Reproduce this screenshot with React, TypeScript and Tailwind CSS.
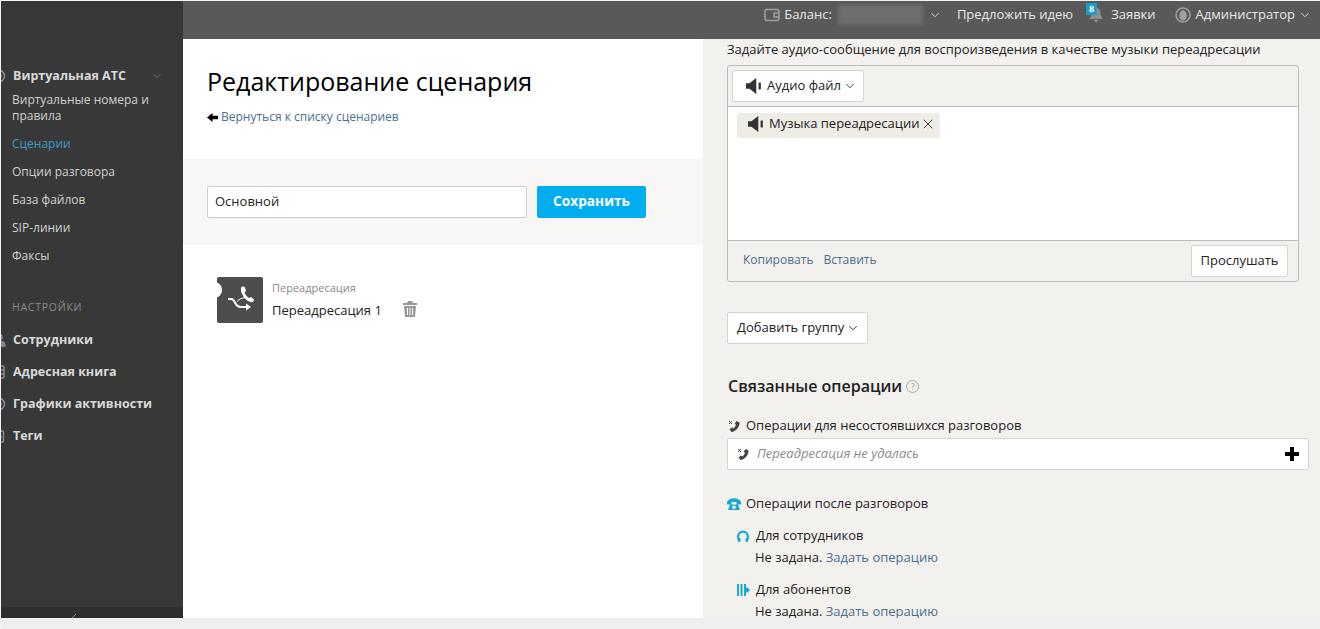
import React from "react";
import { ChevronDown, X } from "lucide-react";

const font = { fontFamily: '"Open Sans", sans-serif' };

const Speaker = ({ className = "" }: { className?: string }) => (
  <svg viewBox="0 0 14 14" className={className} fill="currentColor">
    <path d="M0 4.500h3L9 0v14L3 9.500H0z" />
    <rect x="11" y="4" width="2" height="6" />
  </svg>
);

const MissedCall = ({ className = "" }: { className?: string }) => (
  <svg viewBox="0 0 14 14" className={className} fill="currentColor">
    <path d="M9.500 2L12.500 3.500C13 7.500 8.500 13 4.500 13L2.500 10.500L5 8.500L6.500 9.500C7.500 8.500 8.500 7.300 9 6L7.800 4.500z" />
    <path d="M2 2l3 3M5 2l-3 3" stroke="currentColor" strokeWidth="1" fill="none" />
  </svg>
);

const SideIcon = ({ kind }: { kind: string }) => (
  <svg viewBox="0 0 14 14" className="w-[14px] h-[14px] shrink-0 text-[#8a8a8a]" fill="none" stroke="currentColor" strokeWidth="1.500">
    {kind === "circle" && (
      <>
        <circle cx="7" cy="7" r="5.500" />
        <circle cx="7" cy="7" r="2" fill="currentColor" />
      </>
    )}
    {kind === "user" && (
      <>
        <circle cx="7" cy="4" r="3" fill="currentColor" />
        <path d="M1 13c0-4 2-5 6-5s6 1 6 5z" fill="currentColor" />
      </>
    )}
    {kind === "book" && (
      <>
        <rect x="2" y="1" width="10" height="12" rx="1" />
        <path d="M2 5h10M2 9h10" />
      </>
    )}
    {kind === "tag" && (
      <>
        <rect x="2.500" y="2" width="9" height="11" rx="1" />
        <path d="M5 1v2M9 1v2" />
        <circle cx="8" cy="8" r="1" fill="currentColor" />
      </>
    )}
  </svg>
);

const subItems = ["Опции разговора", "База файлов", "SIP-линии", "Факсы"];
const settingsItems = [
  { label: "Сотрудники", icon: "user" },
  { label: "Адресная книга", icon: "book" },
  { label: "Графики активности", icon: "circle" },
  { label: "Теги", icon: "tag" },
];

const Sidebar = () => (
  <aside className="w-[182px] shrink-0 bg-[#383838] flex flex-col overflow-hidden">
    <div className="flex-1 pt-[64px] pl-[11px]">
      <div className="flex items-center h-[22px] -ml-[20px] pr-[20px]">
        <SideIcon kind="circle" />
        <span className="ml-[7px] text-[12.500px] font-bold text-[#d8d8d8]">Виртуальная АТС</span>
        <ChevronDown className="ml-auto w-[12px] h-[12px] text-[#999]" strokeWidth={1.200} />
      </div>
      <div className="text-[12px] leading-[16px] text-[#d0d0d0] mt-[5px] pr-[20px]">
        Виртуальные номера и правила
      </div>
      <div className="text-[12px] leading-[28px] text-[#3a9cc4] mt-[6px]">Сценарии</div>
      {subItems.map((item) => (
        <div key={item} className="text-[12px] leading-[28px] text-[#d0d0d0]">
          {item}
        </div>
      ))}
      <div className="text-[10.500px] leading-[16px] tracking-[0.07em] text-[#8a8a8a] mt-[29px]">НАСТРОЙКИ</div>
      <div className="mt-[9px]">
        {settingsItems.map((item) => (
          <div key={item.label} className="flex items-center h-[32px] -ml-[20px]">
            <SideIcon kind={item.icon} />
            <span className="ml-[7px] text-[12.500px] font-bold text-[#d8d8d8]">{item.label}</span>
          </div>
        ))}
      </div>
    </div>
    <div className="h-[11px] bg-[#2e2e2e] flex justify-center overflow-hidden">
      <svg viewBox="0 0 6 6" className="w-[6px] h-[6px] mt-[6px] -ml-[36px] text-[#888]" stroke="currentColor">
        <path d="M0 6L5 1" />
      </svg>
    </div>
  </aside>
);

const TopBar = () => (
  <header className="h-[38px] shrink-0 bg-[#595959] flex items-start justify-end pr-[8px] text-[13px] text-white">
    <div className="flex items-center h-[28px] text-[#e8e8e8]">
      <svg viewBox="0 0 16 14" className="w-[16px] h-[14px] text-[#a0a0a0]" fill="none" stroke="currentColor" strokeWidth="1.500">
        <rect x="1" y="1.500" width="14" height="11" rx="2" />
        <path d="M15 5h-5v4h5" />
      </svg>
      <span className="ml-[4px]">Баланс:</span>
      <div className="ml-[6px] w-[85px] h-[20px] bg-[#6e6e6e] blur-[2px]" />
      <ChevronDown className="ml-[5px] w-[14px] h-[14px]" strokeWidth={1.500} />
      <span className="ml-[15px]">Предложить идею</span>
      <div className="relative ml-[15px] w-[16px] h-[16px]">
        <svg viewBox="0 0 16 16" className="w-[16px] h-[16px] text-[#8f8f8f]" fill="currentColor">
          <path d="M8 1c3 0 4.500 2 4.500 5 0 3 1 4.500 2.500 6H1c1.500-1.500 2.500-3 2.500-6C3.500 3 5 1 8 1zM6 13h4c0 1.500-1 2-2 2s-2-.5-2-2z" />
        </svg>
        <span className="absolute -top-[4px] -left-[2px] w-[11px] h-[12px] bg-[#1f9ec8] text-[9px] leading-[12px] text-center font-bold text-white">
          8
        </span>
      </div>
      <span className="ml-[7px]">Заявки</span>
      <svg viewBox="0 0 16 16" className="ml-[19px] w-[16px] h-[16px] text-[#a0a0a0]" fill="none" stroke="currentColor" strokeWidth="1.500">
        <circle cx="8" cy="8" r="7" />
        <ellipse cx="8" cy="8.500" rx="3" ry="4.500" fill="currentColor" />
      </svg>
      <span className="ml-[5px]">Администратор</span>
      <ChevronDown className="ml-[3px] w-[14px] h-[14px]" strokeWidth={1.500} />
    </div>
  </header>
);

const EditorColumn = () => (
  <section className="w-[520px] shrink-0 bg-white">
    <div className="pt-[24px] pl-[24px] h-[120px]">
      <h1 className="text-[25px] leading-[36px] text-black">Редактирование сценария</h1>
      <div className="flex items-center mt-[9px] text-[12px] leading-[18px]">
        <svg viewBox="0 0 10 10" className="w-[11px] h-[11px] text-black" fill="currentColor">
          <path d="M0 5l5-4v2.500h5v3H5V9z" />
        </svg>
        <a className="ml-[3px] text-[#4b6f91]">Вернуться к списку сценариев</a>
      </div>
    </div>
    <div className="h-[86px] bg-[#f8f7f5] flex items-center pl-[24px] gap-[10px]">
      <div className="w-[320px] h-[32px] bg-white border border-[#ccc] rounded-[2px] px-[7px] text-[13px] leading-[28px] text-[#222]">
        Основной
      </div>
      <button className="w-[109px] h-[32px] pb-[2px] bg-[#00aeef] rounded-[2px] text-[13.700px] font-bold text-white">
        Сохранить
      </button>
    </div>
    <div className="flex pt-[32px] pl-[34px]">
      <div className="relative w-[46px] h-[46px] bg-[#4d4d4d] rounded-[2px] overflow-hidden text-white">
        <div className="absolute -left-[11px] top-[5px] w-[16px] h-[16px] rounded-full bg-white" />
        <svg viewBox="0 0 46 46" className="w-[46px] h-[46px]" fill="none" stroke="currentColor">
          <path d="M24 10.500C25 9 27 9 28 10.500L29 14L27.500 15.500C28.500 18 30 20 32 21L34 20L37 22.500C37 24.500 35.500 25.500 33.500 25C28 23.500 23 16 24 10.500z" fill="currentColor" stroke="none" />
          <path d="M11 22h3c3 0 3 2 4.500 4.500s2.500 3.500 5 3.500H30" strokeWidth="2" />
          <path d="M20 24.500c2-2.500 5-3.500 9-4" strokeWidth="1" />
          <path d="M29 26.500l5 3.500-5 3.500z" fill="currentColor" stroke="none" />
        </svg>
      </div>
      <div className="ml-[9px]">
        <div className="text-[11px] leading-[20px] mt-[1px] text-[#888]">Переадресация</div>
        <div className="flex items-center mt-[2px]">
          <span className="text-[13px] leading-[20px] text-[#222]">Переадресация 1</span>
          <svg viewBox="0 0 14 16" className="ml-[21px] -mt-[2px] w-[14px] h-[16px] text-[#999]" fill="currentColor">
            <path d="M5 0h4l1 2h4v2H0V2h4zM1 5h12l-1 11H2zM4 7v7h1V7zm2.500 0v7h1V7zM9 7v7h1V7z" fillRule="evenodd" />
          </svg>
        </div>
      </div>
    </div>
  </section>
);

const SettingsColumn = () => (
  <section className="flex-1 min-w-0 bg-[#f3f1ee] pl-[24px] pr-[11px] text-[13px] text-[#222]">
    <p className="text-[13px] leading-[20px] whitespace-nowrap">
      Задайте аудио-сообщение для воспроизведения в качестве музыки переадресации
    </p>
    <div className="w-[572px] mt-[6px] border border-[#bbb] rounded-[3px]">
      <div className="h-[41px] border-b border-[#bbb] pl-[4px] pt-[4px]">
        <button className="flex items-center w-[132px] h-[32px] bg-white border border-[#d4d4d4] rounded-[2px] pl-[13px]">
          <Speaker className="w-[16px] h-[16px] text-[#333]" />
          <span className="ml-[5px]">Аудио файл</span>
          <ChevronDown className="ml-[2px] w-[14px] h-[14px]" strokeWidth={1.500} />
        </button>
      </div>
      <div className="h-[133px] bg-white pl-[9px] pt-[6px]">
        <div className="inline-flex items-center h-[25px] w-[203px] pb-[3px] bg-[#efece6] rounded-[2px] pl-[11px]">
          <Speaker className="w-[16px] h-[16px] text-[#333]" />
          <span className="ml-[5px]">Музыка переадресации</span>
          <X className="ml-[1px] w-[16px] h-[16px]" strokeWidth={1.300} />
        </div>
      </div>
      <div className="h-[41px] border-t border-[#bbb] flex items-center justify-between pl-[15px] pr-[10px] text-[12px]">
        <div className="flex gap-[10px] pb-[2px] text-[#4b6f91]">
          <a>Копировать</a>
          <a>Вставить</a>
        </div>
        <button className="w-[97px] h-[32px] bg-white border border-[#d4d4d4] rounded-[2px] text-[13px] text-[#222]">
          Прослушать
        </button>
      </div>
    </div>
    <button className="flex items-center w-[141px] h-[32px] mt-[30px] pl-[9px] bg-white border border-[#d4d4d4] rounded-[2px]">
      <span>Добавить группу</span>
      <ChevronDown className="ml-[2px] w-[14px] h-[14px]" strokeWidth={1.500} />
    </button>
    <div className="flex items-center mt-[30px] h-[24px] pl-px">
      <h2 className="text-[16px] font-semibold text-[#222]">Связанные операции</h2>
      <span className="ml-[4px] w-[13px] h-[13px] rounded-full border border-[#aaa] text-[9px] leading-[11px] text-center text-[#999]">?</span>
    </div>
    <div className="flex items-center mt-[18px] h-[20px]">
      <MissedCall className="w-[14px] h-[14px] text-[#444]" />
      <span className="ml-[5px]">Операции для несостоявшихся разговоров</span>
    </div>
    <div className="flex items-center justify-between w-[582px] h-[32px] mt-[2px] bg-white border border-[#d4d4d4] rounded-[2px] pl-[8px] pr-[9px]">
      <div className="flex items-center">
        <MissedCall className="w-[14px] h-[14px] text-[#444]" />
        <span className="ml-[7px] italic text-[#8c8c8c]">Переадресация не удалась</span>
      </div>
      <svg viewBox="0 0 14 14" className="w-[14px] h-[14px] text-black" fill="currentColor">
        <path d="M5 0h4v5h5v4H9v5H5V9H0V5h5z" />
      </svg>
    </div>
    <div className="flex items-center mt-[24px] h-[20px]">
      <svg viewBox="0 0 14 12" className="w-[14px] h-[12px] text-[#19a9d1]" fill="currentColor">
        <path d="M0 4c2-5 12-5 14 0v2.500H9.500V4h-5v2.500H0zM3 6.500h8l2 5.500H1zM7 7.500a1.800 1.800 0 100 3.600 1.800 1.800 0 000-3.600z" fillRule="evenodd" />
      </svg>
      <span className="ml-[5px]">Операции после разговоров</span>
    </div>
    <div className="pl-[10px] mt-[12px]">
      <div className="flex items-center h-[20px]">
        <svg viewBox="0 0 12 13" className="w-[12px] h-[13px] text-[#19a9d1]" fill="none" stroke="currentColor" strokeWidth="2.200">
          <path d="M2.500 10.500A5 5 0 011.100 6.500a4.900 4.900 0 019.800 0 5 5 0 01-1.400 4" />
          <path d="M1.500 8.500h1.500v3H1.500zM9 8.500h1.500v3H9z" fill="currentColor" strokeWidth="1" />
        </svg>
        <span className="ml-[7px]">Для сотрудников</span>
      </div>
      <div className="pl-[18px] mt-[4px] leading-[14px]">
        Не задана. <a className="text-[#4b6f91]">Задать операцию</a>
      </div>
      <div className="flex items-center h-[20px] mt-[16px]">
        <svg viewBox="0 0 13 12" className="w-[13px] h-[12px] text-[#19a9d1]" fill="currentColor">
          <path d="M0 0h2v12H0zM3.500 0h2v12h-2zM7 0h2v12H7zM9 3.500h1.500L13 6l-2.500 2.500H9z" />
        </svg>
        <span className="ml-[6px]">Для абонентов</span>
      </div>
      <div className="pl-[18px] mt-[4px] leading-[14px]">
        Не задана. <a className="text-[#4b6f91]">Задать операцию</a>
      </div>
    </div>
  </section>
);

export default function App() {
  return (
    <div className="w-[1320px] h-[629px] flex flex-col bg-[#f4f4f4] pt-px pl-px overflow-hidden" style={font}>
      <div className="h-[617px] flex shrink-0">
        <Sidebar />
        <div className="flex-1 min-w-0 flex flex-col">
          <TopBar />
          <div className="flex-1 min-h-0 flex">
            <EditorColumn />
            <SettingsColumn />
          </div>
        </div>
      </div>
      <div className="flex-1 bg-[#efefef]" />
    </div>
  );
}
